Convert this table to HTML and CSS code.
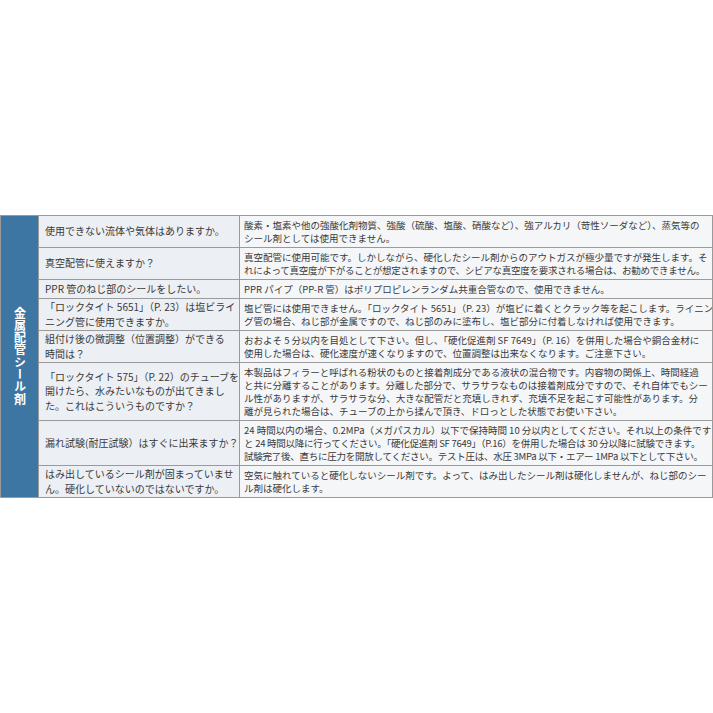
FILE: index.html
```html
<!DOCTYPE html>
<html lang="ja">
<head>
<meta charset="utf-8">
<link rel="stylesheet" href="styles.css">
</head>
<body>
<div class="page">
<table class="faq">
<colgroup><col class="c-cat"><col class="c-q"><col class="c-a"></colgroup>
<tr>
<th class="cat" rowspan="8"><span class="cat-text">金属配管シール剤</span></th>
<td class="q">使用できない流体や気体はありますか。</td>
<td class="a"><span class="ln">酸素・塩素や他の強酸化剤物質、強酸（硫酸、塩酸、硝酸など）、強アルカリ（苛性ソーダなど）、蒸気等の</span><span class="ln">シール剤としては使用できません。</span></td>
</tr>
<tr>
<td class="q">真空配管に使えますか？</td>
<td class="a"><span class="ln">真空配管に使用可能です。しかしながら、硬化したシール剤からのアウトガスが極少量ですが発生します。そ</span><span class="ln tight">れによって真空度が下がることが想定されますので、シビアな真空度を要求される場合は、お勧めできません。</span></td>
</tr>
<tr>
<td class="q">PPR 管のねじ部のシールをしたい。</td>
<td class="a"><span class="ln">PPR パイプ（PP-R 管）はポリプロピレンランダム共重合管なので、使用できません。</span></td>
</tr>
<tr>
<td class="q"><span class="ln">「ロックタイト 5651」（P. 23）は塩ビライ</span><span class="ln">ニング管に使用できますか。</span></td>
<td class="a"><span class="ln">塩ビ管には使用できません。「ロックタイト 5651」（P. 23）が塩ビに着くとクラック等を起こします。ライニン</span><span class="ln">グ管の場合、ねじ部が金属ですので、ねじ部のみに塗布し、塩ビ部分に付着しなければ使用できます。</span></td>
</tr>
<tr>
<td class="q"><span class="ln">組付け後の微調整（位置調整）ができる</span><span class="ln">時間は？</span></td>
<td class="a"><span class="ln">おおよそ 5 分以内を目処として下さい。但し、「硬化促進剤 SF 7649」（P. 16）を併用した場合や銅合金材に</span><span class="ln">使用した場合は、硬化速度が速くなりますので、位置調整は出来なくなります。ご注意下さい。</span></td>
</tr>
<tr>
<td class="q"><span class="ln">「ロックタイト 575」（P. 22）のチューブを</span><span class="ln">開けたら、水みたいなものが出てきまし</span><span class="ln">た。これはこういうものですか？</span></td>
<td class="a"><span class="ln">本製品はフィラーと呼ばれる粉状のものと接着剤成分である液状の混合物です。内容物の関係上、時間経過</span><span class="ln">と共に分離することがあります。分離した部分で、サラサラなものは接着剤成分ですので、それ自体でもシー</span><span class="ln">ル性がありますが、サラサラな分、大きな配管だと充填しきれず、充填不足を起こす可能性があります。分</span><span class="ln">離が見られた場合は、チューブの上から揉んで頂き、ドロっとした状態でお使い下さい。</span></td>
</tr>
<tr>
<td class="q">漏れ試験(耐圧試験）はすぐに出来ますか？</td>
<td class="a"><span class="ln">24 時間以内の場合、0.2MPa（メガパスカル）以下で保持時間 10 分以内としてください。それ以上の条件です</span><span class="ln tight">と 24 時間以降に行ってください。「硬化促進剤 SF 7649」（P.16）を併用した場合は 30 分以降に試験できます。</span><span class="ln tight">試験完了後、直ちに圧力を開放してください。テスト圧は、水圧 3MPa 以下・エアー 1MPa 以下として下さい。</span></td>
</tr>
<tr>
<td class="q"><span class="ln">はみ出しているシール剤が固まっていませ</span><span class="ln">ん。硬化していないのではないですか。</span></td>
<td class="a"><span class="ln">空気に触れていると硬化しないシール剤です。よって、はみ出したシール剤は硬化しませんが、ねじ部のシー</span><span class="ln">ル剤は硬化します。</span></td>
</tr>
</table>
</div>
</body>
</html>
```
FILE: styles.css
```css
html, body {
  margin: 0;
  padding: 0;
  background: #ffffff;
}
.page {
  padding-top: 215px;
  width: 713px;
  font-family: "Noto Sans CJK JP", "Noto Sans", sans-serif;
  color: #3a3a3a;
}
.faq {
  width: 713px;
  border-collapse: collapse;
  table-layout: fixed;
}
.c-cat { width: 38px; }
.c-q { width: 201px; }
.faq td, .faq th {
  border: 1px solid #9a9a9a;
  vertical-align: middle;
  line-height: 13px;
}
.cat {
  background: #3e76a3;
  border-left: none;
  padding: 0;
  text-align: center;
}
.cat-text {
  writing-mode: vertical-rl;
  text-orientation: upright;
  color: #ffffff;
  font-size: 12px;
  font-weight: bold;
  letter-spacing: 0.3px;
  line-height: 14px;
}
.faq .q {
  background: #eceff4;
  font-size: 10px;
  line-height: 14.5px;
  padding: 1px 4px 1px 6px;
  white-space: nowrap;
  overflow: hidden;
}
.a {
  background: #f5f6f8;
  font-size: 9.5px;
  padding: 3px 2px 2px 4px;
  white-space: nowrap;
  overflow: hidden;
  border-right: 1px solid #9a9a9a;
}
.ln {
  display: block;
}
.tight {
  letter-spacing: -0.25px;
}
```
